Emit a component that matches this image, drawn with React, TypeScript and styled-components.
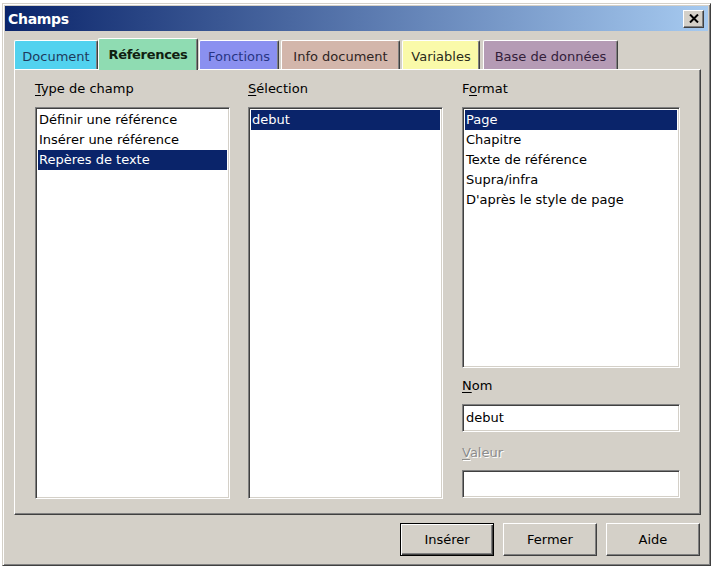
import React from 'react'
import styled, { createGlobalStyle } from 'styled-components'

const GlobalStyle = createGlobalStyle`
  body {
    margin: 0;
    background: #ffffff;
    font-family: "DejaVu Sans", "Noto Sans", sans-serif;
    font-size: 13px;
    color: #000000;
  }
`

interface TabItem {
  title: string
  width: number
  gap: number
  background: string
  color: string
  active?: boolean
}

const TABS: TabItem[] = [
  { title: 'Document', width: 84, gap: 0, background: '#52d2ef', color: '#1f3a5c' },
  { title: 'Références', width: 100, gap: 0, background: '#8fdcb2', color: '#102010', active: true },
  { title: 'Fonctions', width: 80, gap: 1, background: '#8a90f0', color: '#283583' },
  { title: 'Info document', width: 119, gap: 2, background: '#d3b6ab', color: '#2e2424' },
  { title: 'Variables', width: 78, gap: 2, background: '#fafaa9', color: '#2a2a1a' },
  { title: 'Base de données', width: 135, gap: 3, background: '#b59bb5', color: '#33203a' },
]

const TYPES = ['Définir une référence', 'Insérer une référence', 'Repères de texte']
const SELECTIONS = ['debut']
const FORMATS = ['Page', 'Chapitre', 'Texte de référence', 'Supra/infra', "D'après le style de page"]

const App = () => {
  return (
    <>
      <GlobalStyle />
      <Window>
        <TitleBar>
          <Title>Champs</Title>
          <CloseButton>
            <svg width="10" height="9" viewBox="0 0 10 9">
              <path d="M1 0.5 L9 8.5 M9 0.5 L1 8.5" stroke="#000" strokeWidth="2" />
            </svg>
          </CloseButton>
        </TitleBar>
        <Body>
          <TabStrip>
            {TABS.map((tab) => (
              <Tab
                key={tab.title}
                $width={tab.width}
                $gap={tab.gap}
                $background={tab.background}
                $color={tab.color}
                $active={tab.active}
              >
                {tab.title}
              </Tab>
            ))}
          </TabStrip>
          <Panel>
            <Column $width={195}>
              <Label>
                <Key>T</Key>ype de champ
              </Label>
              <ListBox $grow>
                {TYPES.map((item, index) => (
                  <ListRow key={item} $selected={index === 2}>
                    {item}
                  </ListRow>
                ))}
              </ListBox>
            </Column>
            <Column $width={195}>
              <Label>
                <Key>S</Key>élection
              </Label>
              <ListBox $grow>
                {SELECTIONS.map((item) => (
                  <ListRow key={item} $selected>
                    {item}
                  </ListRow>
                ))}
              </ListBox>
            </Column>
            <Column $width={218}>
              <Label>
                F<Key>o</Key>rmat
              </Label>
              <ListBox $height={261}>
                {FORMATS.map((item, index) => (
                  <ListRow key={item} $selected={index === 0}>
                    {item}
                  </ListRow>
                ))}
              </ListBox>
              <Label $top={8}>
                <Key>N</Key>om
              </Label>
              <TextField>debut</TextField>
              <Label $top={11} $bottom={7} $disabled>
                <Key>V</Key>aleur
              </Label>
              <TextField />
            </Column>
          </Panel>
          <ButtonRow>
            <Button $default>Insérer</Button>
            <Button>Fermer</Button>
            <Button>Aide</Button>
          </ButtonRow>
        </Body>
      </Window>
    </>
  )
}

export default App

const Window = styled.div`
  box-sizing: border-box;
  width: 709px;
  margin: 3px 0 0 2px;
  padding: 2px;
  background: #d4d0c8;
  border: 1px solid;
  border-color: #d4d0c8 #404040 #404040 #d4d0c8;
  box-shadow: inset 1px 1px #ffffff, inset -1px -1px #808080;
`

const TitleBar = styled.div`
  height: 25px;
  display: flex;
  align-items: center;
  justify-content: space-between;
  padding: 0 4px 0 3px;
  background: linear-gradient(to right, #0a246a, #a6caf0);
`

const Title = styled.span`
  color: #ffffff;
  font-weight: 700;
  font-size: 14px;
  letter-spacing: -0.3px;
`

const CloseButton = styled.div`
  box-sizing: border-box;
  width: 21px;
  height: 18px;
  display: flex;
  align-items: center;
  justify-content: center;
  background: #d4d0c8;
  border: 1px solid;
  border-color: #ffffff #404040 #404040 #ffffff;
  box-shadow: inset -1px -1px #808080;
`

const Body = styled.div`
  padding: 7px 7px 7px 9px;
`

const TabStrip = styled.div`
  display: flex;
  align-items: flex-end;
  height: 31px;
  position: relative;
  z-index: 1;
`

const Tab = styled.div<{
  $width: number
  $gap: number
  $background: string
  $color: string
  $active?: boolean
}>`
  box-sizing: border-box;
  width: ${({ $width }) => $width}px;
  height: ${({ $active }) => ($active ? 32 : 29)}px;
  margin-left: ${({ $gap }) => $gap}px;
  margin-bottom: ${({ $active }) => ($active ? -1 : 0)}px;
  display: flex;
  align-items: center;
  justify-content: center;
  padding-top: ${({ $active }) => ($active ? 0 : 3)}px;
  padding-bottom: ${({ $active }) => ($active ? 1 : 0)}px;
  background: ${({ $background }) => $background};
  color: ${({ $color }) => $color};
  font-weight: ${({ $active }) => ($active ? 700 : 400)};
  letter-spacing: ${({ $active }) => ($active ? -0.3 : 0)}px;
  font-size: 13px;
  white-space: nowrap;
  border-top: 1px solid #ffffff;
  border-left: 1px solid #ffffff;
  border-right: 1px solid #404040;
  border-radius: 2px 2px 0 0;
  box-shadow: inset -1px 0 #808080;
`

const Panel = styled.div`
  box-sizing: border-box;
  height: 446px;
  display: flex;
  gap: 18px;
  padding: 9px 19px 15px 20px;
  border: 1px solid;
  border-color: #ffffff #404040 #404040 #ffffff;
  box-shadow: inset -1px -1px #808080;

  & > :last-child {
    margin-left: 1px;
  }
`

const Column = styled.div<{ $width: number }>`
  width: ${({ $width }) => $width}px;
  display: flex;
  flex-direction: column;
`

const Label = styled.div<{ $top?: number; $bottom?: number; $disabled?: boolean }>`
  flex: none;
  height: 20px;
  line-height: 20px;
  margin-top: ${({ $top }) => $top ?? 0}px;
  margin-bottom: ${({ $bottom }) => $bottom ?? 8}px;
  color: ${({ $disabled }) => ($disabled ? '#8c8c8c' : '#000000')};
  text-shadow: ${({ $disabled }) => ($disabled ? '1px 1px #ffffff' : 'none')};
`

const Key = styled.span`
  text-decoration: underline;
  text-underline-offset: 2px;
`

const ListBox = styled.div<{ $grow?: boolean; $height?: number }>`
  box-sizing: border-box;
  ${({ $grow }) => ($grow ? 'flex: 1;' : '')}
  ${({ $height }) => ($height ? `height: ${$height}px; flex: none;` : '')}
  padding: 2px;
  background: #ffffff;
  border: 1px solid;
  border-color: #808080 #ffffff #ffffff #808080;
  box-shadow: inset 1px 1px #404040, inset -1px -1px #d4d0c8;
`

const ListRow = styled.div<{ $selected?: boolean }>`
  height: 20px;
  line-height: 20px;
  padding-left: 1px;
  white-space: nowrap;
  background: ${({ $selected }) => ($selected ? '#0a246a' : 'transparent')};
  color: ${({ $selected }) => ($selected ? '#ffffff' : '#000000')};
`

const TextField = styled.div`
  box-sizing: border-box;
  flex: none;
  height: 28px;
  padding: 0 3px;
  line-height: 26px;
  background: #ffffff;
  border: 1px solid;
  border-color: #808080 #ffffff #ffffff #808080;
  box-shadow: inset 1px 1px #404040, inset -1px -1px #d4d0c8;
`

const ButtonRow = styled.div`
  display: flex;
  justify-content: flex-end;
  gap: 9px;
  margin-top: 8px;
  padding-right: 1px;
`

const Button = styled.div<{ $default?: boolean }>`
  box-sizing: border-box;
  width: 94px;
  height: 33px;
  display: flex;
  align-items: center;
  justify-content: center;
  background: #d4d0c8;
  border: 1px solid;
  border-color: ${({ $default }) =>
    $default ? '#000000' : '#ffffff #404040 #404040 #ffffff'};
  box-shadow: ${({ $default }) =>
    $default
      ? 'inset 1px 1px #ffffff, inset -1px -1px #404040, inset -2px -2px #808080'
      : 'inset -1px -1px #808080'};
`
